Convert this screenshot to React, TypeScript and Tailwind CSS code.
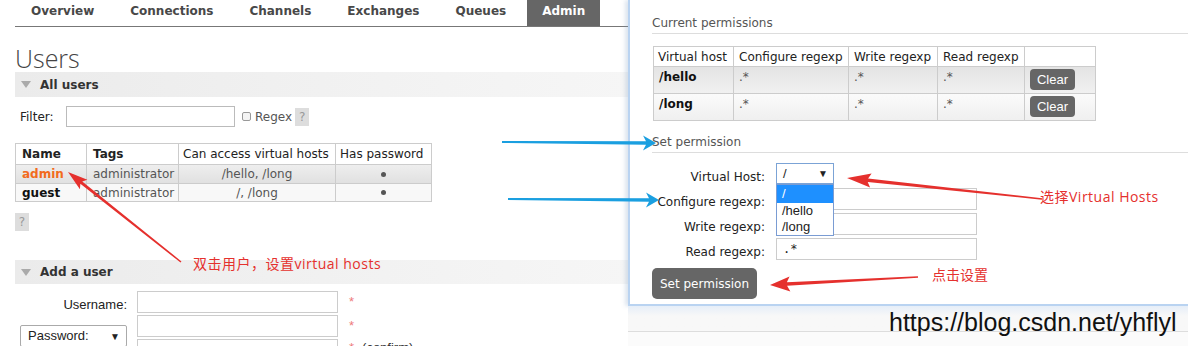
import React from 'react';

const tabs = ['Overview', 'Connections', 'Channels', 'Exchanges', 'Queues', 'Admin'];

type ArrowProps = {
  x1: number;
  y1: number;
  x2: number;
  y2: number;
  color: string;
  headL: number;
  headW: number;
  body: number;
  tail: number;
};

// tapered annotation arrow, tail -> tip
function Arrow({ x1, y1, x2, y2, color, headL, headW, body, tail }: ArrowProps) {
  const dx = x2 - x1;
  const dy = y2 - y1;
  const len = Math.hypot(dx, dy);
  const ux = dx / len;
  const uy = dy / len;
  const nx = -uy;
  const ny = ux;
  const bx = x2 - ux * headL;
  const by = y2 - uy * headL;
  const kx = bx + ux * 3;
  const ky = by + uy * 3;
  const pts = [
    [x1 + (nx * tail) / 2, y1 + (ny * tail) / 2],
    [kx + (nx * body) / 2, ky + (ny * body) / 2],
    [bx + (nx * headW) / 2, by + (ny * headW) / 2],
    [x2, y2],
    [bx - (nx * headW) / 2, by - (ny * headW) / 2],
    [kx - (nx * body) / 2, ky - (ny * body) / 2],
    [x1 - (nx * tail) / 2, y1 - (ny * tail) / 2],
  ];
  return <polygon points={pts.map((p) => p.join(',')).join(' ')} fill={color} />;
}

const LeftPage: React.FC = () => {
  return (
    <div className="w-[628px] shrink-0 pl-[15px] text-[#222] font-['DejaVu_Sans',Verdana,sans-serif]">
      {/* nav */}
      <nav className="h-[27px] border-b border-[#777] flex gap-[6px] pl-[1px] text-[12px] leading-[14px] font-bold text-[#484848]">
        {tabs.map((t) => (
          <div key={t} className={t === 'Admin' ? 'px-[15px] pt-[4px] bg-[#666] text-white' : 'px-[15px] pt-[4px]'}>
            {t}
          </div>
        ))}
      </nav>

      <h1 className="h-[45px] pt-[14px] leading-[34px] text-[25px] font-light text-[#444] font-['Open_Sans',sans-serif]">
        Users
      </h1>

      {/* All users */}
      <div className="h-[25px] flex items-center bg-linear-to-r from-[#ebebeb] via-[#f1f1f1] to-[#f6f6f6]">
        <span className="ml-[6px] w-0 h-0 border-l-[5px] border-r-[5px] border-t-[7px] border-l-transparent border-r-transparent border-t-[#aaa]" />
        <span className="ml-[9px] text-[12px] font-bold text-[#333]">All users</span>
      </div>

      <div className="mt-[9px] h-[21px] flex items-center text-[12px]">
        <span className="ml-[5px] w-[46px]">Filter:</span>
        <span className="w-[169px] h-[21px] border border-[#bbb] bg-white" />
        <span className="ml-[7px] w-[9px] h-[9px] border border-[#999] rounded-[2px] bg-[#f4f4f4]" />
        <span className="ml-[4px] text-[#555]">Regex</span>
        <span className="ml-[3px] w-[14px] h-[18px] bg-[#ddd] text-[#999] flex items-center justify-center">?</span>
      </div>

      <table className="mt-[16px] w-[416px] table-fixed border-collapse text-[12px] leading-[14px]">
        <colgroup>
          <col className="w-[71px]" />
          <col className="w-[92px]" />
          <col className="w-[157px]" />
          <col className="w-[96px]" />
        </colgroup>
        <thead>
          <tr className="h-[21px] bg-white">
            <th className="border border-[#ccc] px-[6px] text-left font-bold">Name</th>
            <th className="border border-[#ccc] px-[6px] text-left font-bold">Tags</th>
            <th className="border border-[#ccc] px-[4px] text-left font-normal whitespace-nowrap">Can access virtual hosts</th>
            <th className="border border-[#ccc] px-[4px] text-left font-normal whitespace-nowrap">Has password</th>
          </tr>
        </thead>
        <tbody className="text-[#555]">
          <tr className="h-[19px] bg-linear-to-b from-[#eeeeee] to-[#e0e0e0]">
            <td className="border border-[#ccc] px-[6px] font-bold text-[#f26b1d]">admin</td>
            <td className="border border-[#ccc] px-[6px]">administrator</td>
            <td className="border border-[#ccc] text-center">/hello, /long</td>
            <td className="border border-[#ccc]">
              <div className="mx-auto w-[5px] h-[5px] rounded-full bg-[#555]" />
            </td>
          </tr>
          <tr className="h-[18px] bg-[#f8f8f8]">
            <td className="border border-[#ccc] px-[6px] font-bold text-[#111]">guest</td>
            <td className="border border-[#ccc] px-[6px]">administrator</td>
            <td className="border border-[#ccc] text-center">/, /long</td>
            <td className="border border-[#ccc]">
              <div className="mx-auto w-[5px] h-[5px] rounded-full bg-[#555]" />
            </td>
          </tr>
        </tbody>
      </table>

      <div className="mt-[11px] w-[14px] h-[18px] bg-[#ddd] text-[#999] text-[12px] flex items-center justify-center">?</div>

      {/* Add a user */}
      <div className="mt-[29px] h-[24px] flex items-center bg-linear-to-r from-[#ebebeb] via-[#f1f1f1] to-[#f6f6f6]">
        <span className="ml-[6px] w-0 h-0 border-l-[5px] border-r-[5px] border-t-[7px] border-l-transparent border-r-transparent border-t-[#aaa]" />
        <span className="ml-[9px] text-[12px] font-bold text-[#333]">Add a user</span>
      </div>

      <div className="mt-[7px] flex flex-col gap-[2px] font-['Liberation_Sans',Arial,sans-serif] text-[13px]">
        <div className="flex h-[22px]">
          <div className="w-[112px] text-right leading-[22px] pt-[3px]">Username:</div>
          <div className="ml-[10px] w-[201px] h-[22px] border border-[#ccc] bg-white" />
          <div className="ml-[11px] text-[#ee7b7b] leading-none pt-[4px]">*</div>
        </div>
        <div className="flex">
          <div className="w-[112px] pl-[5px] pt-[10px]">
            <div className="w-[107px] h-[22px] border border-[#aaa] rounded-[2px] bg-white flex items-center justify-between pl-[7px] pr-[6px]">
              <span>Password:</span>
              <span className="text-[10px]">▼</span>
            </div>
          </div>
          <div className="ml-[10px] flex flex-col gap-[2px]">
            <div className="w-[201px] h-[22px] border border-[#ccc] bg-white" />
            <div className="w-[201px] h-[22px] border border-[#ccc] bg-white" />
          </div>
          <div className="ml-[11px] flex flex-col gap-[1px] leading-none">
            <div className="h-[22px] pt-[4px] text-[#ee7b7b]">*</div>
            <div className="h-[22px] pt-[3px] text-[#333]">
              <span className="text-[#ee7b7b]">*</span>
              <span className="ml-[8px]">(confirm)</span>
            </div>
          </div>
        </div>
      </div>
    </div>
  );
};

const PermissionPanel: React.FC = () => {
  const cell = 'border border-[#ccc] px-[5px] align-top pt-[2px]';
  const rows = [
    { vh: '/hello', bg: 'h-[27px] bg-linear-to-b from-[#e4e4e4] to-[#f1f1f1]' },
    { vh: '/long', bg: 'h-[27px] bg-linear-to-b from-[#fbfbfb] to-[#efefef]' },
  ];
  return (
    <div className="h-[306px] shrink-0 bg-white border-l-2 border-b-2 border-[#b9d3f1] pl-[22px] shadow-[-3px_0_4px_rgba(120,150,190,0.25)] font-['DejaVu_Sans',Verdana,sans-serif] text-[#222]">
      <h3 className="pt-[15px] pb-[2px] leading-[16px] border-b border-[#ddd] text-[12px] text-[#555]">Current permissions</h3>

      <table className="mt-[12px] ml-[1px] w-[442px] table-fixed border-collapse text-[12px] leading-[16px]">
        <colgroup>
          <col className="w-[80px]" />
          <col className="w-[115px]" />
          <col className="w-[89px]" />
          <col className="w-[87px]" />
          <col className="w-[71px]" />
        </colgroup>
        <thead>
          <tr className="h-[20px] bg-white">
            <th className="border border-[#ccc] px-[4px] text-left font-normal whitespace-nowrap">Virtual host</th>
            <th className="border border-[#ccc] px-[5px] text-left font-normal whitespace-nowrap">Configure regexp</th>
            <th className="border border-[#ccc] px-[5px] text-left font-normal whitespace-nowrap">Write regexp</th>
            <th className="border border-[#ccc] px-[5px] text-left font-normal whitespace-nowrap">Read regexp</th>
            <th className="border border-[#ccc]" />
          </tr>
        </thead>
        <tbody>
          {rows.map((r) => (
            <tr key={r.vh} className={r.bg}>
              <td className={cell + ' font-bold text-[#111]'}>{r.vh}</td>
              <td className={cell + ' text-[#555]'}>.*</td>
              <td className={cell + ' text-[#555]'}>.*</td>
              <td className={cell + ' text-[#555]'}>.*</td>
              <td className="border border-[#ccc] align-top pt-[2px] pl-[5px]">
                <div className="w-[45px] h-[21px] rounded-[4px] bg-[#666] text-white text-[13px] font-['Liberation_Sans',Arial,sans-serif] flex items-center justify-center">
                  Clear
                </div>
              </td>
            </tr>
          ))}
        </tbody>
      </table>

      <h3 className="mt-[13px] pb-[2px] leading-[16px] border-b border-[#ddd] text-[12px] text-[#555]">Set permission</h3>

      <div className="mt-[10px] flex flex-col gap-[3px] text-[12px]">
        <div className="flex h-[22px]">
          <div className="w-[113px] text-right pt-[6px] leading-[16px]">Virtual Host:</div>
          <div className="ml-[11px] relative">
            <div className="w-[58px] h-[21px] border border-[#7ba3d6] bg-white flex items-center justify-between pl-[6px] pr-[5px] font-['Liberation_Sans',Arial,sans-serif] text-[13px]">
              <span>/</span>
              <span className="text-[10px]">▼</span>
            </div>
            <div className="absolute left-0 top-[21px] z-10 w-[58px] border border-[#7a9cd3] bg-white font-['Liberation_Sans',Arial,sans-serif] text-[13px]">
              <div className="h-[18px] leading-[18px] pl-[5px] bg-[#1e90ff] text-white">/</div>
              <div className="h-[16px] leading-[16px] pl-[5px]">/hello</div>
              <div className="h-[16px] leading-[16px] pl-[5px]">/long</div>
            </div>
          </div>
        </div>
        {['Configure regexp:', 'Write regexp:', 'Read regexp:'].map((l) => (
          <div key={l} className="flex h-[22px]">
            <div className="w-[113px] text-right pt-[6px] leading-[16px] whitespace-nowrap">{l}</div>
            <div className="ml-[11px] w-[201px] h-[22px] border border-[#ccc] bg-white pl-[6px] leading-[20px] font-['DejaVu_Sans_Mono',monospace] text-[12px]">
              {l === 'Read regexp:' ? '.*' : ''}
            </div>
          </div>
        ))}
      </div>

      <div className="mt-[8px] w-[105px] h-[31px] rounded-[5px] bg-[#666] text-white text-[12px] flex items-center justify-center">
        Set permission
      </div>
    </div>
  );
};

const Annotations: React.FC = () => {
  const red = '#e5302d';
  const blue = '#1a9fe0';
  return (
    <>
      <svg className="absolute inset-0 pointer-events-none" width={1188} height={346} viewBox="0 0 1188 346">
        <Arrow x1={181} y1={262} x2={68} y2={172} color={red} headL={20} headW={12} body={3} tail={1.5} />
        <Arrow x1={502} y1={142} x2={656} y2={143} color={blue} headL={13} headW={15} body={3.5} tail={2} />
        <Arrow x1={508} y1={199} x2={659} y2={200} color={blue} headL={13} headW={15} body={3.5} tail={2} />
        <Arrow x1={1042} y1={199} x2={847} y2={178} color={red} headL={24} headW={14} body={3.5} tail={1.5} />
        <Arrow x1={918} y1={277} x2={770} y2={285} color={red} headL={20} headW={15} body={3.5} tail={1.5} />
      </svg>
      <div className="absolute left-[193px] top-[256px] text-[14px] leading-[16px] tracking-[0.5px] text-[#e5302d] font-['Open_Sans','Noto_Sans_CJK_SC',sans-serif] whitespace-nowrap">
        双击用户，设置virtual hosts
      </div>
      <div className="absolute left-[1040px] top-[189px] text-[14px] leading-[16px] tracking-[0.5px] text-[#e5302d] font-['Open_Sans','Noto_Sans_CJK_SC',sans-serif] whitespace-nowrap">
        选择Virtual Hosts
      </div>
      <div className="absolute left-[932px] top-[267px] text-[14px] leading-[16px] text-[#e5302d] font-['Open_Sans','Noto_Sans_CJK_SC',sans-serif] whitespace-nowrap">
        点击设置
      </div>
      <div className="absolute left-[889px] top-[310px] text-[25px] leading-[25px] text-[#111] font-['Liberation_Sans',Arial,sans-serif] whitespace-nowrap">
        https://blog.csdn.net/yhflyl
      </div>
    </>
  );
};

export default function App() {
  return (
    <div className="relative w-[1188px] h-[346px] overflow-hidden bg-white flex">
      <LeftPage />
      <div className="w-[560px] shrink-0 flex flex-col">
        <PermissionPanel />
        <div className="h-[26px] border-b border-[#ddd] bg-linear-to-b from-[#e6eef8] to-[#f8f8f8] to-40%" />
        <div className="flex-1 bg-[#fbfbfb]" />
      </div>
      <Annotations />
    </div>
  );
}
